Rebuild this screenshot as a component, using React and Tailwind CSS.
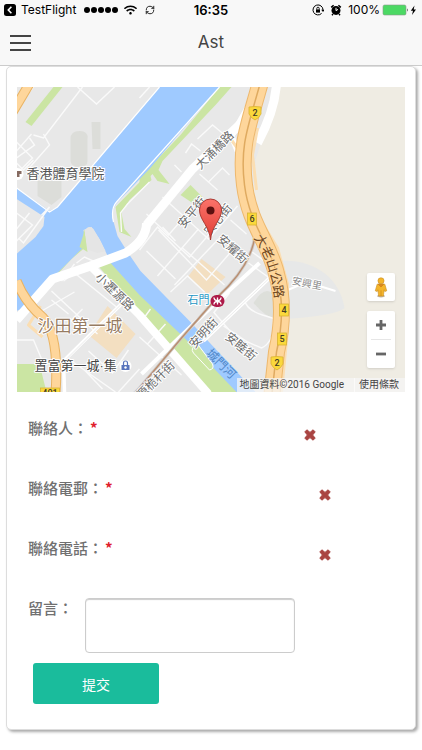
import React, { useState } from 'react';
import { FaWifi } from 'react-icons/fa';
import { LuRefreshCw } from 'react-icons/lu';

const fields = [
    { id: 'name', label: '聯絡人', type: 'text' },
    { id: 'email', label: '聯絡電郵', type: 'email' },
    { id: 'phone', label: '聯絡電話', type: 'tel' },
];

function StatusBar() {
    return (
        <div className="grid h-5 grid-cols-[1fr_auto_1fr] items-center pl-1 pr-1 text-[12px] leading-5 text-black">
            <div className="flex items-center">
                <svg viewBox="0 0 12 12" className="mr-[5px] h-3 w-3">
                    <rect width="12" height="12" rx="2.5" fill="#000" />
                    <path d="M7.4 2.8 4.3 6l3.1 3.2" fill="none" stroke="#fff" strokeWidth="1.6" />
                </svg>
                <span>TestFlight</span>
                <svg viewBox="0 0 34 6" className="ml-2 h-[6px] w-[34px]">
                    <circle cx="3" cy="3" r="3" />
                    <circle cx="10" cy="3" r="3" />
                    <circle cx="17" cy="3" r="3" />
                    <circle cx="24" cy="3" r="3" />
                    <circle cx="31" cy="3" r="3" />
                </svg>
                <FaWifi className="ml-[6px] h-3 w-[13px]" />
                <LuRefreshCw className="ml-2 h-[10px] w-[10px]" />
            </div>
            <span className="text-[13px] font-semibold">16:35</span>
            <div className="flex items-center justify-end">
                <svg viewBox="0 0 12 12" className="mr-[6px] h-3 w-3" fill="none" stroke="#000">
                    <path d="M9.6 9.4A5 5 0 1 1 11 6" strokeWidth="1" />
                    <path d="M9.2 5.8h3.6L11 8z" fill="#000" stroke="none" />
                    <rect x="4" y="5.4" width="4" height="3.2" fill="#000" stroke="none" />
                    <path d="M4.8 5.5V4.4a1.2 1.2 0 0 1 2.4 0v1.1" strokeWidth=".9" />
                </svg>
                <svg viewBox="0 0 12 12" className="mr-[6px] h-3 w-3">
                    <circle cx="6" cy="6.4" r="4.5" />
                    <path d="M1.2 3.4 3.6 1.2M10.8 3.4 8.4 1.2M3 10l-1 1.2M9 10l1 1.2" stroke="#000" strokeWidth="1.5" />
                    <path d="M6 3.8v2.8l2-1.2" fill="none" stroke="#fff" strokeWidth="1" />
                </svg>
                <span>100%</span>
                <svg viewBox="0 0 36 12" className="ml-[2px] h-3 w-9">
                    <rect x="1" y="1" width="23" height="10" rx="1.5" fill="#4cd964" stroke="#8a9a8c" strokeWidth=".6" />
                    <path d="M25 4.2q1.6 1.8 0 3.6z" fill="#333" />
                    <path d="M32.5 1.5 28.8 6.8h2.2L30 11l4-5.6h-2.3z" />
                </svg>
            </div>
        </div>
    );
}

function MapDrawing() {
    return (
        <svg
            viewBox="17 87 389 305"
            preserveAspectRatio="xMidYMid slice"
            className="block h-full w-full"
            role="img"
            aria-label="地圖"
        >
            <rect x="17" y="87" width="389" height="305" fill="#e8e8e8" />

            {/* hillside */}
            <path d="M279 87H406V392H278L284 340 286 290 266 235 254 190 256 160Z" fill="#efece3" />
            <path d="M279 261C312 258 340 276 345 308Q336 316 284 319Z" fill="#e7e8e8" />

            {/* sports ground */}
            <path d="M71 139q0-8 9-8t8 8v22q0 6-8 6t-9-6zM92 122h9v27h-8zM38 181h24v16l-10 8-14-9z" fill="#dcddd9" />

            {/* parks */}
            <path d="M54 87H63L32 126 26 122Z" fill="#cbe5a3" />
            <path d="M220 87H232L216 105 163 161 159 170 170 184 158 181 153 174 140 187V178L181 135Z" fill="#cbe5a3" />
            <path d="M191 185 203 197 196 205 181 195Z" fill="#cbe5a3" />
            <path d="M150 172 116 207 120 232 132 237 125 229 122 213 130 200 152 180Z" fill="#cbe5a3" />
            <path d="M85 230 92 242 72 259 22 314V303Z" fill="#cbe5a3" />
            <path d="M96 263 113 261 238 392H210Z" fill="#cbe5a3" />
            <path d="M17 364H40L47 392H17Z" fill="#cbe5a3" />

            {/* river and channels */}
            <path
                d="M160 87H220L181 132 150 169 121 199Q112 207 113 218L118 236 128 252 141 271 190 321 256 392H237L186 339 140 295 112 264 100 239 92 227 84 230 85 246 65 266 22 309 17 311V254L36 237 44 226 45 217 17 199V188L50 211 58 207Z"
                fill="#9fcaff"
            />
            <path d="M85 231Q89 224 94 229L101 241 106 251 99 253 84 248 86 240Z" fill="#e5e5e5" />
            <path d="M85 231 80 247 88 252Z" fill="#cbe5a3" />
            <path d="M160 87 58 207 50 212 17 188M220 87 142 174 117 202Q111 209 114 222" fill="none" stroke="#fff" strokeWidth="1.2" />

            {/* city blocks */}
            <path d="M202 259 226 277 208 294 189 276Z" fill="#f3dfc1" />
            <path d="M108 306 136 334 117 358 89 335Z" fill="#f3dfc1" />
            <path d="M254 303Q265 285 274 294V318Q266 317 254 303Z" fill="#dddfda" />

            {/* small streets */}
            <g fill="none" stroke="#fafafa" strokeWidth="1.400">
                <path d="M83 87 44 138 34 135M78 87 97 104 115 87M17 151 32 134M44 134 50 145 28 170M17 142 33 158 17 174M17 158 35 145 30 138M34 160 24 170 17 163M17 107 34 87M140 98 150 87" />
                <path d="M17 213 33 225 17 241M17 229 30 213M42 215 50 207 24 243 20 239" />
                <path d="M122 232 121 213 128 204 150 182" />
                <path d="M198 139 213 125 224 134M186 153 192 144 201 151M175 165 182 172M200 174 218 190M209 182 223 168 230 175M163 197 209 239 238 206M147 214 169 235 190 211" />
                <path d="M140 250 158 227 190 257 215 228M158 276 199 229M175 285 222 236M159 230 207 280 233 250M147 251 176 279M171 292 188 276 205 292M183 248 225 285M163 227 176 241M231 220 247 234" />
                <path d="M249 263 270 278M224 326 248 342 262 348Q274 343 277 317M230 293 214 313M245 300Q247 310 263 315L276 319M214 312 241 343M250 250 269 264" />
                <path d="M52 291 98 334M64 281 75 273 117 307M37 314 75 292M52 300 69 314M62 330 83 309M17 340H34L45 366M72 361 116 392M89 351 113 373 129 350M84 369 103 389M119 392 140 369M140 337 182 375M148 344 166 324" />
                <path d="M77 263 85 257 98 263M75 264 62 281M143 320 151 309" />
            </g>
            <path d="M65 392 64 361 127 299M204 341 270 278" fill="none" stroke="#fff" strokeWidth="3.500" />
            <path d="M65 361 127 299M204 341 270 278" fill="none" stroke="#e3e3e3" strokeWidth=".7" />

            {/* main roads */}
            <g fill="none" stroke="#fff" strokeLinejoin="round">
                <path d="M242 123 193 169 147 225" strokeWidth="9" />
                <path d="M147 223Q147 240 126 253L91 266 53 279 17 320" strokeWidth="9" />
                <path d="M90 265 140 315 209 394" strokeWidth="8" />
                <path d="M277 84Q275 112 258 143" strokeWidth="9" />
                <path d="M248 108 232 136 238 151" strokeWidth="6" />
                <path d="M142 374 217 302 260 263" strokeWidth="4" />
                <path d="M276 304 274 348 266 392" strokeWidth="4" />
                <path d="M279 294 307 282 336 291" strokeWidth="2" />
            </g>
            <path d="M198 344q-8 4-4 9l16 17q5-1 3-6z" fill="#cbe5a3" stroke="#fff" />

            {/* rail line */}
            <path d="M256 232Q253 265 218 297L182 338 140 388 134 394" fill="none" stroke="#cdc6c1" strokeWidth="3" />
            <path d="M256 232Q253 265 218 297L182 338 140 388 134 394" fill="none" stroke="#b98c6d" strokeWidth="1.300" />

            {/* highways */}
            <g fill="none" strokeLinejoin="round">
                <path d="M229 136 240 151 245 185M258 128 253 155 257 190M264 225 278 248 288 284 288 330 282 392M41 306 29 325 43 337" stroke="#fbdeb2" strokeWidth="3" />
                <path d="M261 82C249 126 240 145 245 185S270 243 277 274Q287 309 277 352L272 398" stroke="#edb86e" strokeWidth="17" />
                <path d="M261 82C249 126 240 145 245 185S270 243 277 274Q287 309 277 352L272 398" stroke="#fed69b" strokeWidth="15" />
                <path d="M261 82C249 126 240 145 245 185S270 243 277 274Q287 309 277 352L272 398" stroke="#dfaa60" strokeWidth="1.5" />
                <path d="M17 281Q26 303 43 317 60 334 56 394M12 114 31 82" stroke="#e9b363" strokeWidth="10" />
                <path d="M17 281Q26 303 43 317 60 334 56 394M12 114 31 82" stroke="#fed69b" strokeWidth="8" />
            </g>

            {/* route shields */}
            <g fill="#fbd83c" stroke="#d9b334" strokeWidth=".8">
                <path d="M249.500 107q6-1 12 0v7q-2 4-6 6-4-2-6-6zM271.500 357q6-1 12 0v7q-2 4-6 6-4-2-6-6z" />
                <rect x="248" y="213" width="9" height="12" />
                <rect x="280" y="304" width="9" height="12" />
                <rect x="278" y="333" width="9" height="12" />
                <rect x="41" y="388" width="19" height="8" />
            </g>
            <g className="font-['Roboto',sans-serif] text-[9px] font-medium" fill="#443c25" textAnchor="middle">
                <text x="255.500" y="116">2</text>
                <text x="252.500" y="222">6</text>
                <text x="284.500" y="313">4</text>
                <text x="282.500" y="342">5</text>
                <text x="277.500" y="366">2</text>
                <text x="50.500" y="396">401</text>
            </g>

            {/* street and place names */}
            <g
                className="font-['Noto_Sans_CJK_TC',sans-serif] text-[12px]"
                fill="#6c6c6c"
                stroke="#fff"
                strokeWidth="2"
                paintOrder="stroke"
                strokeLinejoin="round"
            >
                <text transform="translate(201 170) rotate(-45)">大涌橋路</text>
                <text transform="translate(184 229) rotate(-50)">安平街</text>
                <text transform="translate(210 236) rotate(-50)">安心街</text>
                <text transform="translate(217 240) rotate(42)">安耀街</text>
                <text transform="translate(95 278) rotate(44)">小瀝源路</text>
                <text transform="translate(195 349) rotate(-48)">安明街</text>
                <text transform="translate(225 338) rotate(40)">安睦街</text>
                <text transform="translate(142 400) rotate(-45)">源桅杆街</text>
                <text transform="translate(292 284) rotate(11)" className="text-[10px]" fill="#8c8c8c">安興里</text>
                <text transform="translate(206 354) rotate(45)" fill="#4f87c8" stroke="#9fcaff" strokeWidth="1">城門河</text>
                <path id="highway-label" d="M254 238Q270 259 275 298" fill="none" stroke="none" />
                <text fill="#70481f" stroke="#fed69b" className="text-[13px]">
                    <textPath href="#highway-label">大老山公路</textPath>
                </text>
                <text x="27" y="178" className="text-[13px]" fill="#555">香港體育學院</text>
                <text x="38" y="332" className="text-[17px]" fill="#967b62">沙田第一城</text>
                <text x="35" y="370" className="font-['Roboto','Noto_Sans_CJK_TC',sans-serif] text-[13px]" fill="#444">
                    置富第一城<tspan className="font-['Liberation_Sans',sans-serif]">·</tspan>集
                </text>
                <text x="188" y="304" className="text-[11px]" fill="#2596c4">石門</text>
            </g>

            {/* place icons */}
            <circle cx="18" cy="174" r="6" fill="#fff" />
            <path d="M14 171h8v3h-2v3h-6z" fill="#866b61" />
            <circle cx="126" cy="366" r="6" fill="#fff" />
            <path d="M122 365h8v5h-8z" fill="#5874bd" />
            <path d="M124 365v-2a2 2 0 0 1 4 0v2" fill="none" stroke="#5874bd" strokeWidth="1.2" />
            <circle cx="126" cy="367.500" r="1.2" fill="#fff" />
            <rect x="211" y="295" width="14" height="12" rx="6" fill="#ad1948" />
            <path d="M218 297.500v7M214.500 297.500q0 3 3.500 3t3.500-3M214.500 304.500q0-3 3.500-3t3.500 3" fill="none" stroke="#fff" strokeWidth="1.3" />

            {/* marker */}
            <path d="M211 240C210 226 200 220 200 210A11 11 0 0 1 222 210C222 220 212 226 211 240Z" fill="url(#pin)" stroke="#a93b34" />
            <circle cx="211" cy="210.500" r="4" fill="#5c1110" />
            <defs>
                <linearGradient id="pin" x1="0" y1="0" x2="0" y2="1">
                    <stop offset="0" stopColor="#fb736a" />
                    <stop offset="1" stopColor="#e03d35" />
                </linearGradient>
            </defs>
        </svg>
    );
}

function MapPanel() {
    return (
        <div className="relative h-[305px] overflow-hidden">
            <MapDrawing />
            <div className="absolute bottom-6 right-[10px] flex w-7 flex-col gap-[10px]">
                <button aria-label="街景服務" className="flex h-7 items-center justify-center rounded-[2px] bg-white shadow">
                    <svg viewBox="0 0 14 22" className="h-[21px] w-[14px]">
                        <ellipse cx="7" cy="20" rx="4" ry="1.5" fill="#c5b9a4" />
                        <path d="M3 7.500h8l2 7-2 .8-.7-2L9.500 20h-5l-.8-6.700-.7 2-2-.8z" fill="#f4b52b" stroke="#c88b20" strokeWidth=".6" />
                        <circle cx="7" cy="4" r="3.200" fill="#f4b52b" stroke="#c88b20" strokeWidth=".6" />
                        <path d="M4 7.500h6L7 10.500zM7 14v6" fill="#df861e" stroke="#c47b18" strokeWidth=".6" />
                    </svg>
                </button>
                <div className="flex flex-col rounded-[2px] bg-white shadow">
                    <button aria-label="放大" className="flex h-7 items-center justify-center">
                        <svg viewBox="0 0 10 10" className="h-[10px] w-[10px]">
                            <path d="M5 0v10M0 5h10" stroke="#666" strokeWidth="2.800" />
                        </svg>
                    </button>
                    <div className="mx-1 h-px bg-[#e6e6e6]" />
                    <button aria-label="縮小" className="flex h-7 items-center justify-center">
                        <svg viewBox="0 0 10 10" className="h-[10px] w-[10px]">
                            <path d="M0 5h10" stroke="#666" strokeWidth="2.800" />
                        </svg>
                    </button>
                </div>
            </div>
            <div className="absolute bottom-0 right-0 flex h-[14px] items-center gap-[10px] bg-[#f5f5f5]/75 pl-[3px] pr-[6px] font-['Roboto','Noto_Sans_CJK_TC',sans-serif] text-[10px] leading-[14px] text-[#444]">
                <span>地圖資料©2016 Google</span>
                <a href="#terms" className="border-l border-white/60 pl-1">使用條款</a>
            </div>
        </div>
    );
}

function InvalidMark() {
    return (
        <svg viewBox="0 0 12 12" className="mt-[13px] h-3 w-3 shrink-0" aria-hidden="true">
            <path
                d="M2.900.8 6 3.400 9.100.8 11.200 2.900 8.600 6l2.600 3.100-2.100 2.100L6 8.600 2.900 11.200.8 9.100 3.400 6 .8 2.900z"
                fill="#a94442"
                stroke="#a94442"
                strokeWidth="1"
                strokeLinejoin="round"
            />
        </svg>
    );
}

function ContactForm() {
    const [values, setValues] = useState({ name: '', email: '', phone: '', message: '' });

    const handleChange = (e) => {
        setValues({ ...values, [e.target.id]: e.target.value });
    };

    return (
        <form
            onSubmit={(e) => e.preventDefault()}
            className="px-[11px] pt-6 font-['Noto_Sans_CJK_TC',sans-serif] text-[15px] leading-6 text-[#707070]"
        >
            {fields.map((field) => (
                <div key={field.id} className="flex h-[60px] items-start">
                    <label htmlFor={field.id} className="shrink-0 font-medium">
                        {field.label}：<span className="ml-[2px] font-bold text-[#e0202c]">*</span>
                    </label>
                    <input
                        id={field.id}
                        type={field.type}
                        value={values[field.id]}
                        onChange={handleChange}
                        className="mr-1 h-9 w-[202px] min-w-0 bg-transparent px-2 outline-none"
                    />
                    <InvalidMark />
                </div>
            ))}
            <div className="flex items-start gap-3">
                <label htmlFor="message" className="shrink-0 font-medium">留言：</label>
                <textarea
                    id="message"
                    value={values.message}
                    onChange={handleChange}
                    className="mt-[2px] h-[55px] w-[210px] resize-none rounded-[4px] border border-[#ccc] bg-white px-2 shadow-[inset_0_1px_1px_#ccc] outline-none"
                />
            </div>
            <button
                type="submit"
                className="ml-[5px] mt-[10px] h-[41px] w-[126px] rounded-[3px] bg-[#1abc9c] text-[14px] text-white"
            >
                提交
            </button>
        </form>
    );
}

export default function App() {
    return (
        <div className="min-h-screen bg-white font-['Inter','Noto_Sans_CJK_TC',sans-serif]">
            <header className="border-b border-[#ccc] bg-[#f8f8f8]">
                <StatusBar />
                <div className="grid h-[45px] grid-cols-[1fr_auto_1fr] items-center px-[10px]">
                    <button aria-label="選單" className="flex w-[21px] flex-col gap-[5px]">
                        <span className="h-[2px] bg-[#444]" />
                        <span className="h-[2px] bg-[#444]" />
                        <span className="h-[2px] bg-[#444]" />
                    </button>
                    <h1 className="text-[17px] text-[#444]">Ast</h1>
                </div>
            </header>
            <main className="mx-[6px] rounded-[5px] border border-[#ddd] bg-white px-[10px] pb-[25px] pt-5 shadow-[2px_2px_3px_#aaa]">
                <MapPanel />
                <ContactForm />
            </main>
        </div>
    );
}
